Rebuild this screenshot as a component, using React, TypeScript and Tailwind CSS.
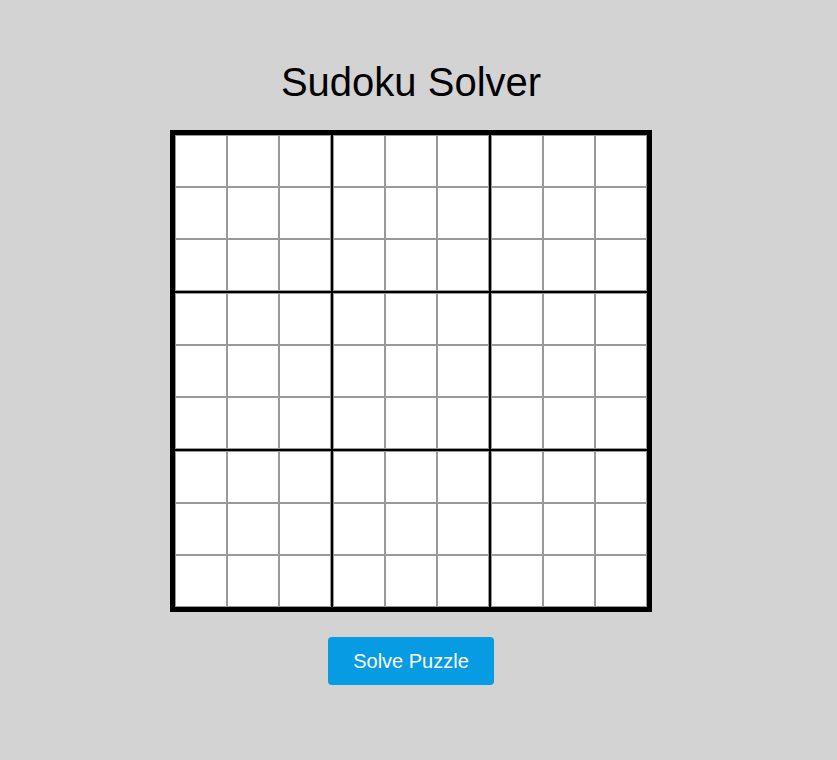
import React, { useState } from 'react';

const Box = ({ values, onChange, boxIndex }: { values: string[]; onChange: (i: number, v: string) => void; boxIndex: number }) => (
  <div className="grid grid-cols-3">
    {Array.from({ length: 9 }).map((_, i) => {
      const row = Math.floor(boxIndex / 3) * 3 + Math.floor(i / 3);
      const col = (boxIndex % 3) * 3 + (i % 3);
      const idx = row * 9 + col;
      return (
        <input
          key={i}
          type="text"
          maxLength={1}
          value={values[idx]}
          onChange={(e) => onChange(idx, e.target.value.replace(/[^1-9]/g, ''))}
          className="w-[52px] h-[52px] border border-[#999] bg-white text-center text-2xl text-black outline-none"
        />
      );
    })}
  </div>
);

export default function App() {
  const [values, setValues] = useState<string[]>(Array(81).fill(''));

  const setCell = (i: number, v: string) => {
    const next = [...values];
    next[i] = v;
    setValues(next);
  };

  return (
    <div className="min-h-screen bg-[#d3d3d3] font-['Liberation_Sans',Arial,sans-serif]">
      <div className="w-[822px] flex flex-col items-center pt-[59px]">
        <h1 className="text-[40px] leading-[46px] text-black mb-[25px]">Sudoku Solver</h1>
        <div className="grid grid-cols-3 gap-[2px] bg-black border-[5px] border-black">
          {Array.from({ length: 9 }).map((_, b) => (
            <Box key={b} boxIndex={b} values={values} onChange={setCell} />
          ))}
        </div>
        <button className="mt-[25px] w-[166px] h-[48px] rounded-[4px] bg-[#069be3] text-white text-[20px]">
          Solve Puzzle
        </button>
      </div>
    </div>
  );
}
